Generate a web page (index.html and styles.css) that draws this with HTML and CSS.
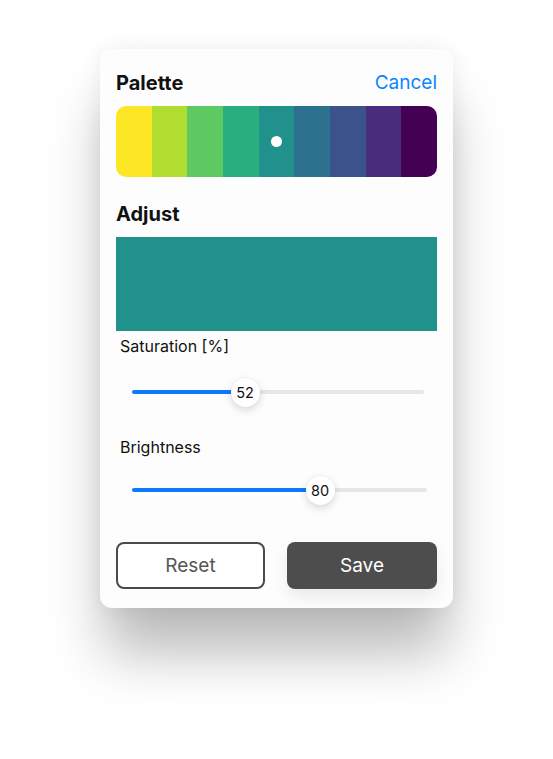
FILE: index.html
```html
<!DOCTYPE html>
<html lang="en">
<head>
<meta charset="utf-8">
<link rel="stylesheet" href="styles.css">
</head>
<body>
<div class="card">
  <div class="header">
    <h2 class="title">Palette</h2>
    <span class="cancel">Cancel</span>
  </div>
  <div class="palette">
    <div class="sw" style="background:#fde725"></div>
    <div class="sw" style="background:#b0dd2f"></div>
    <div class="sw" style="background:#5ec962"></div>
    <div class="sw" style="background:#29af7f"></div>
    <div class="sw sel" style="background:#21918c"></div>
    <div class="sw" style="background:#2c728e"></div>
    <div class="sw" style="background:#3b528b"></div>
    <div class="sw" style="background:#472d7b"></div>
    <div class="sw" style="background:#440154"></div>
  </div>
  <h2 class="title adjust">Adjust</h2>
  <div class="preview"></div>
  <div class="label">Saturation [%]</div>
  <div class="slider s1">
    <div class="track">
      <div class="fill" style="width:113px"></div>
      <div class="thumb" style="left:113px">52</div>
    </div>
  </div>
  <div class="label l2">Brightness</div>
  <div class="slider s2">
    <div class="track t2">
      <div class="fill" style="width:188px"></div>
      <div class="thumb" style="left:188px">80</div>
    </div>
  </div>
  <div class="buttons">
    <button class="btn reset">Reset</button>
    <button class="btn save">Save</button>
  </div>
</div>
</body>
</html>
```
FILE: styles.css
```css
html, body { margin: 0; padding: 0; background: #fff; }
body {
  min-height: 759px;
  padding-top: 49px;
  box-sizing: border-box;
  font-family: Inter, "Noto Sans", "Liberation Sans", sans-serif;
  color: #111;
}
.card {
  width: 353px;
  box-sizing: border-box;
  margin: 0 auto;
  padding: 22px 16px 19px;
  background: #fdfdfd;
  border-radius: 12px;
  box-shadow: 0 50px 55px -5px rgba(0,0,0,0.27), 0 0 22px rgba(0,0,0,0.07);
}
.header {
  display: flex;
  justify-content: space-between;
  align-items: center;
  height: 24px;
}
.title {
  margin: 0;
  font-size: 20px;
  font-weight: 700;
  line-height: 24px;
  color: #111;
}
.cancel {
  font-size: 19px;
  color: #0a84ff;
  line-height: 24px;
}
.palette {
  display: flex;
  margin-top: 11px;
  height: 71px;
  border-radius: 10px;
  overflow: hidden;
}
.sw { flex: 1; position: relative; }
.sel::after {
  content: "";
  position: absolute;
  left: 50%;
  top: 50%;
  width: 11px;
  height: 11px;
  margin: -5.5px 0 0 -5.5px;
  border-radius: 50%;
  background: #fff;
}
.adjust { margin-top: 25px; }
.preview {
  margin-top: 11px;
  height: 94px;
  background: #21918c;
}
.label {
  padding-left: 4px;
  font-size: 16px;
  line-height: 20px;
  margin-top: 5px;
  color: #111;
}
.l2 { margin-top: 23px; }
.slider {
  height: 44px;
  display: flex;
  align-items: center;
  padding: 0 13px 0 16px;
}
.s1 { margin-top: 14px; }
.s2 { margin-top: 11px; padding-right: 10px; }
.track {
  position: relative;
  flex: 1;
  height: 4px;
  border-radius: 2px;
  background: #e6e6e6;
}
.fill {
  height: 4px;
  border-radius: 2px;
  background: #0a7aff;
}
.thumb {
  position: absolute;
  top: 2px;
  width: 29px;
  height: 29px;
  margin: -14.5px 0 0 -14.5px;
  border-radius: 50%;
  background: #fff;
  box-shadow: 0 3px 8px rgba(0,0,0,0.15), 0 0 2px rgba(0,0,0,0.06);
  display: flex;
  align-items: center;
  justify-content: center;
  font-size: 14.5px;
  color: #111;
}
.buttons {
  display: grid;
  grid-template-columns: 149px 150px;
  justify-content: space-between;
  margin-top: 30px;
}
.btn {
  padding: 0;
  height: 47px;
  border-radius: 8px;
  font-family: inherit;
  font-size: 19px;
  box-sizing: border-box;
}
.reset {
  background: #fff;
  border: 2px solid #4a4a4a;
  color: #555;
}
.save {
  background: #4d4d4d;
  border: none;
  color: #fff;
  box-shadow: 0 8px 16px rgba(0,0,0,0.08);
}
```
